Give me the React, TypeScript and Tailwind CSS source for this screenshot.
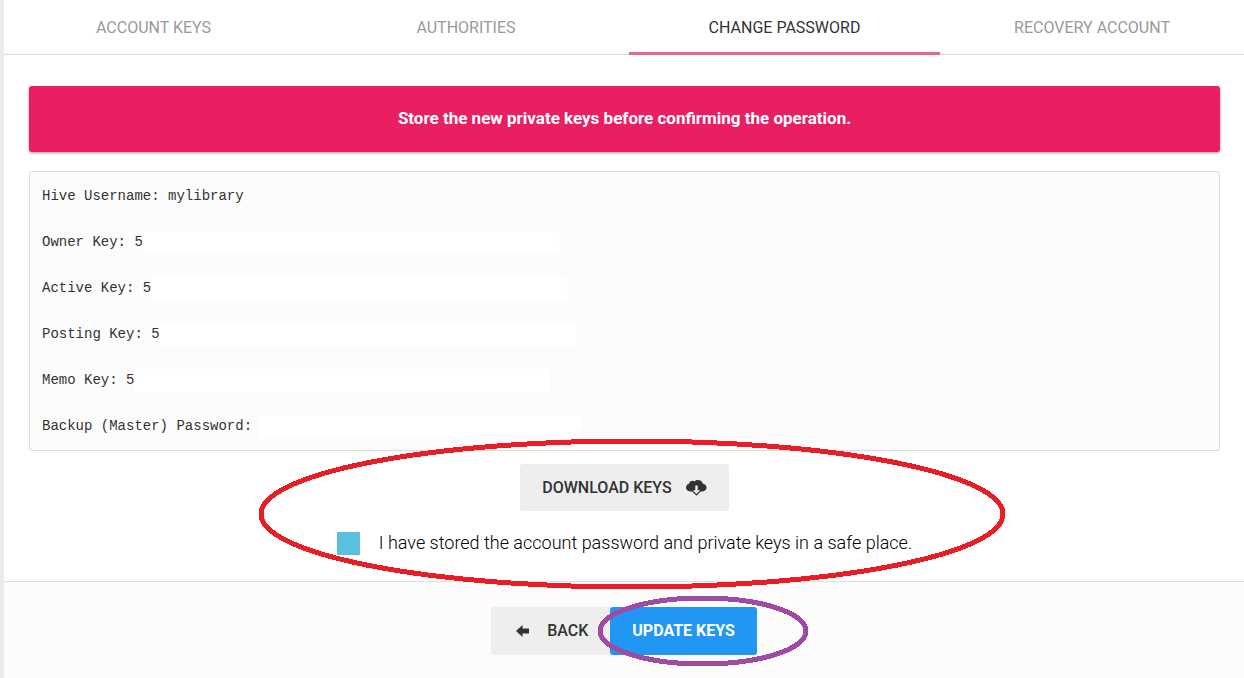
const tabs = [
  { label: "Account Keys", active: false },
  { label: "Authorities", active: false },
  { label: "Change Password", active: true },
  { label: "Recovery Account", active: false },
];

const keys = [
  { label: "Hive Username:", value: "mylibrary", mask: "" },
  { label: "Owner Key:", value: "5", mask: "w-[416px]" },
  { label: "Active Key:", value: "5", mask: "w-[416px]" },
  { label: "Posting Key:", value: "5", mask: "w-[416px]" },
  { label: "Memo Key:", value: "5", mask: "w-[416px]" },
  { label: "Backup (Master) Password:", value: "", mask: "w-[320px]" },
];

function CloudDownloadIcon() {
  return (
    <svg viewBox="0 0 21 16" className="h-4 w-[21px]" aria-hidden="true">
      <path
        fill="#333"
        d="M5 11.5C2 11.5 0 9.8 0 7.4c0-1.9 1.2-3.3 3-3.7C3.4 1.9 5 .8 6.7.8c.7 0 1.3.2 1.9.5C9.4.4 10.6 0 11.9 0c2.5 0 4.5 1.5 5 3.7 2.1.3 3.7 1.9 3.7 3.9 0 2.2-1.8 3.9-4.3 3.9h-1.7L10.5 15.7 6.3 11.5z"
      />
      <path fill="#eee" d="M9.300 5.500h2.400v4.800h2.500L10.500 14 6.800 10.300h2.500z" />
    </svg>
  );
}

function ArrowLeftIcon() {
  return (
    <svg viewBox="0 0 13 12" className="h-3 w-[13px]" aria-hidden="true">
      <path fill="#333" d="M0 6 6.5 0v3.500H13v5H6.500V12z" />
    </svg>
  );
}

function Tabs() {
  return (
    <nav className="grid grid-cols-[299fr_326fr_311fr_304fr] border-b border-[#ddd]">
      {tabs.map((tab) => (
        <a
          key={tab.label}
          href="#"
          className={
            tab.active
              ? "-mb-px h-[55px] border-b-3 border-[#e06890] pt-4 text-center uppercase text-[#333]"
              : "h-[54px] pt-4 text-center uppercase text-[#999]"
          }
        >
          {tab.label}
        </a>
      ))}
    </nav>
  );
}

// hand-drawn rings that point at the two steps
function Markers() {
  return (
    <svg
      className="pointer-events-none absolute top-[436px] left-1/2 h-[232px] w-[752px] -translate-x-[368px]"
      viewBox="0 0 752 232"
      fill="none"
      strokeWidth="5"
      shapeRendering="crispEdges"
      aria-hidden="true"
    >
      <ellipse cx="376" cy="78" rx="371" ry="73" stroke="#e71e25" />
      <ellipse cx="447" cy="195" rx="103" ry="33" stroke="#9f4aa3" />
    </svg>
  );
}

export default function App() {
  return (
    <div className="min-h-screen bg-[#ebebeb] pl-1 font-[Roboto,sans-serif] text-base text-[#333]">
      <div className="relative flex min-h-screen flex-col overflow-hidden bg-white">
        <Tabs />

        <main className="flex flex-col pt-[31px] pr-6 pl-[25px]">
          <div
            role="alert"
            className="rounded-[3px] bg-[#e91e63] pt-[19px] pb-[21px] text-center text-[17px] leading-[26px] font-bold text-white shadow-[0_1px_3px_rgba(0,0,0,0.4)]"
          >
            Store the new private keys before confirming the operation.
          </div>

          <pre className="mt-[19px] flex flex-col gap-[23px] rounded-[3px] border border-[#ddd] bg-[#fcfcfc] px-3 pt-[13px] pb-3 font-['Liberation_Mono',monospace] text-sm leading-[23px]">
            {keys.map((k) => (
              <div key={k.label} className="flex">
                {k.label} {k.value}
                {k.mask && <span className={`bg-white ${k.mask}`} />}
              </div>
            ))}
          </pre>

          <div className="flex flex-col items-center">
            <button
              type="button"
              className="mt-[13px] flex h-[47px] items-center gap-[14px] rounded-[3px] bg-[#eee] px-[22px] font-medium uppercase"
            >
              Download Keys
              <CloudDownloadIcon />
            </button>

            <label className="mt-[19px] mb-[25px] flex items-center gap-[19px] text-lg leading-[26px] font-light text-black">
              <input
                type="checkbox"
                className="size-[23px] appearance-none bg-[#5bc0de]"
              />
              I have stored the account password and private keys in a safe place.
            </label>
          </div>
        </main>

        <footer className="flex flex-1 items-start justify-center border-t border-[#ddd] bg-[#fcfcfc] pt-[25px]">
          <button
            type="button"
            className="flex h-12 items-center gap-[18px] rounded-l-[3px] bg-[#eee] px-[22px] pl-[25px] font-medium uppercase"
          >
            <ArrowLeftIcon />
            Back
          </button>
          <button
            type="button"
            className="h-12 rounded-[3px] bg-[#2196f3] px-[22px] font-bold text-white uppercase"
          >
            Update Keys
          </button>
        </footer>

        <Markers />
      </div>
    </div>
  );
}
